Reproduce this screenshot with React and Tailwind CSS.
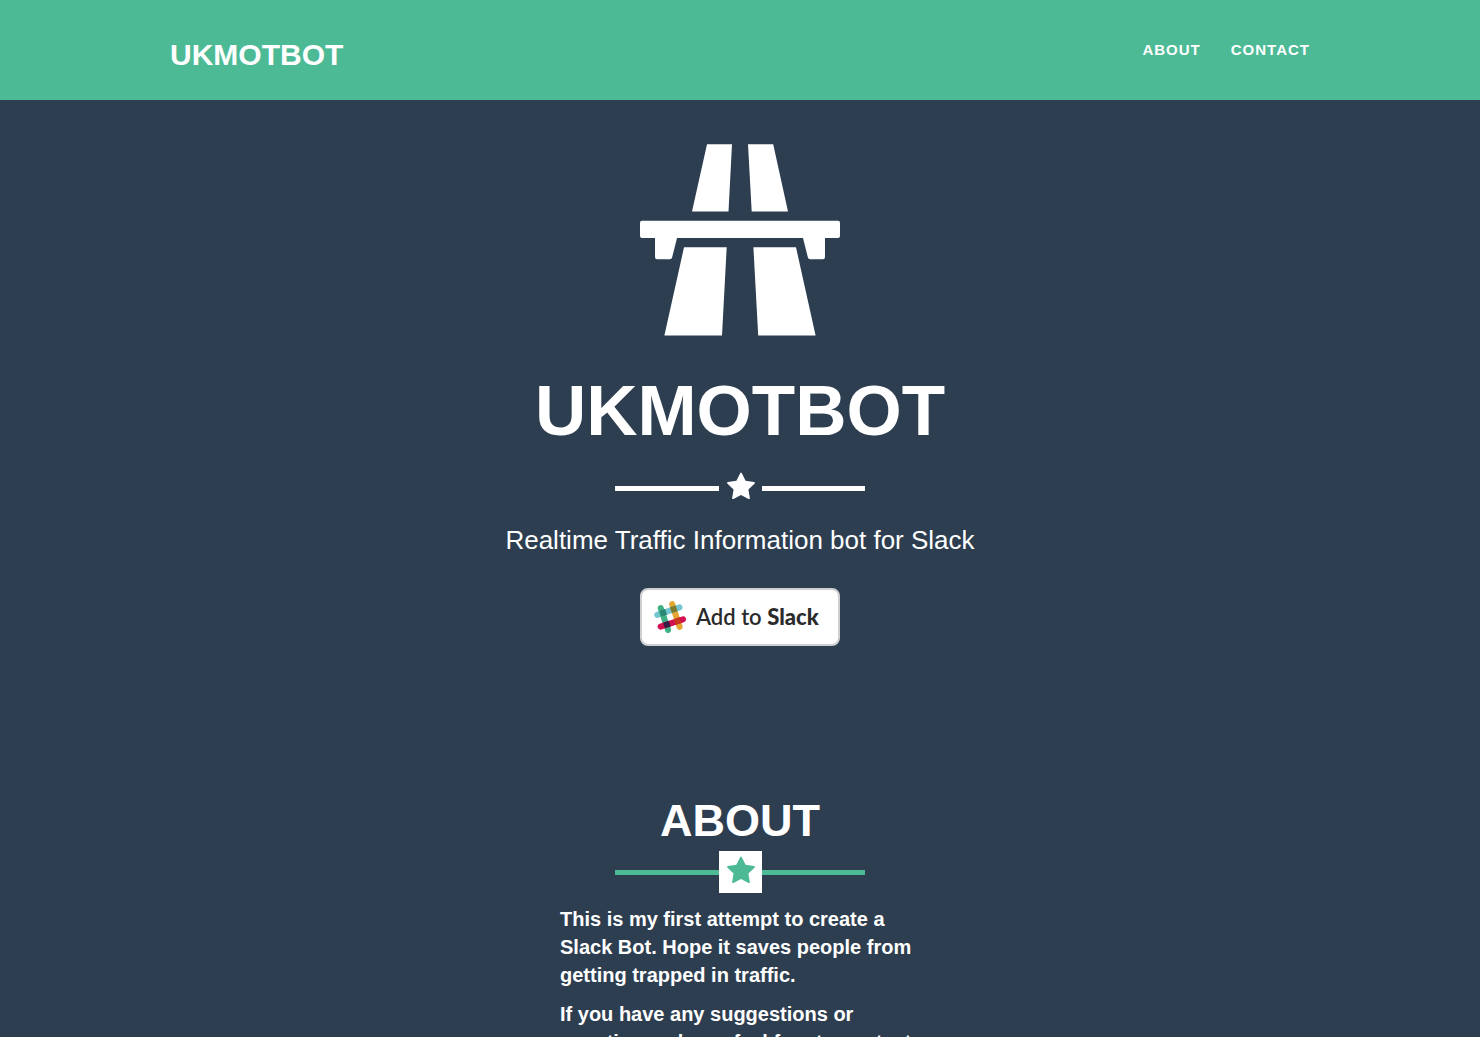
const STAR =
  "M1728 647q0 22-26 48l-363 354 86 500q1 7 1 20 0 21-10.5 35.5t-30.5 14.5q-19 0-40-12l-449-236-449 236q-22 12-40 12-21 0-31.5-14.5t-10.5-35.5q0-6 2-20l86-500-364-354q-25-27-25-48 0-37 56-46l502-73 225-455q19-41 49-41t49 41l225 455 502 73q56 9 56 46z";

function Star() {
  return (
    <svg className="size-[30px]" viewBox="0 0 1792 1792" fill="currentColor" aria-hidden="true">
      <path d={STAR} />
    </svg>
  );
}

function MotorwayLogo() {
  return (
    <svg className="w-[200px]" viewBox="0 0 200 200" fill="#fff" role="img" aria-label="Motorway">
      <path d="M67 4.3H92L88.5 71.5H52ZM108 4.3H133.2L148 71.5H111.7ZM44 107.3H86.7L82 195.6H24.4ZM113.4 107.3H156L175.6 195.6H118.2Z" />
      <path d="M2 80.8H198Q200 80.8 200 82.8V96Q200 98 198 98H185V117Q185 119.2 183 119.2H170Q168.3 119.2 167.9 117.5L163 98H37L32.1 117.5Q31.7 119.2 30 119.2H17Q15 119.2 15 117V98H2Q0 98 0 96V82.8Q0 80.8 2 80.8Z" />
    </svg>
  );
}

function SlackMark() {
  return (
    <svg className="size-8" viewBox="0 0 32 32" fill="none" strokeWidth="6" strokeLinecap="round" aria-hidden="true">
      <path d="M18.2 3.2L25.6 25.8" stroke="#e3a630" />
      <path d="M3.2 13.8L25.5 6.4" stroke="#76c5d3" />
      <path d="M6.7 7L14.1 29" stroke="#3fb083" />
      <path d="M6.6 25.6L29 18.3" stroke="#d3104f" />
      <g strokeLinecap="butt">
        <path d="M6.4 12.7L12.1 10.8" stroke="#2c8778" />
        <path d="M16.9 9.2L22.6 7.3" stroke="#7c7a2d" />
        <path d="M10 24.5L15.7 22.6" stroke="#371c44" />
        <path d="M20.6 21L26.3 19.2" stroke="#c7361d" />
      </g>
    </svg>
  );
}

export default function App() {
  return (
    <div className="min-h-screen bg-[#2d3e50] font-['Liberation_Sans',sans-serif] text-white">
      <header className="bg-[#4dba96]">
        <nav className="mx-auto flex h-[100px] max-w-[1170px] justify-between px-[15px] pt-8 font-bold">
          <a href="#top" className="text-[30px] leading-[46px]">UKMOTBOT</a>
          <div className="flex gap-[30px] pt-2 text-[15px] leading-5 tracking-[1px]">
            <a href="#about">ABOUT</a>
            <a href="#contact">CONTACT</a>
          </div>
        </nav>
      </header>
      <main>
        <section id="top" className="flex flex-col items-center px-4 pt-10">
          <MotorwayLogo />
          <h1 className="mt-8 text-[71px] leading-[78px] font-bold">UKMOTBOT</h1>
          <div className="mt-[17px] flex h-[42px] w-[250px] items-center">
            <span className="h-[5px] flex-1 bg-white" />
            <span className="flex w-[43px] justify-end pr-[6px] pb-[2px]"><Star /></span>
            <span className="h-[5px] flex-1 bg-white" />
          </div>
          <p className="mt-[13px] text-[26px] leading-9">Realtime Traffic Information bot for Slack</p>
          <button
            type="button"
            className="mt-[30px] flex h-[58px] w-[200px] items-center gap-[10px] rounded-lg border-2 border-[#cfcfd2] bg-white pl-3 font-['Lato',sans-serif] text-[22px] text-[#2b2b2b]"
          >
            <SlackMark />
            <span className="pb-[2px] font-semibold">Add to <span className="font-black">Slack</span></span>
          </button>
        </section>
        <section id="about" className="mt-[150px] flex flex-col items-center px-4">
          <h2 className="text-[45px] leading-[50px] font-bold">ABOUT</h2>
          <div className="mt-[5px] flex h-[42px] w-[250px] items-center text-[#4dba96]">
            <span className="h-[5px] flex-1 bg-current" />
            <span className="flex h-[42px] w-[43px] justify-end bg-white pt-[5px] pr-[6px]"><Star /></span>
            <span className="h-[5px] flex-1 bg-current" />
          </div>
          <div className="mt-3 max-w-[360px] space-y-[11px] text-xl leading-7 font-bold">
            <p>This is my first attempt to create a Slack Bot. Hope it saves people from getting trapped in traffic.</p>
            <p>If you have any suggestions or questions, please feel free to contact me.</p>
          </div>
        </section>
      </main>
    </div>
  );
}
